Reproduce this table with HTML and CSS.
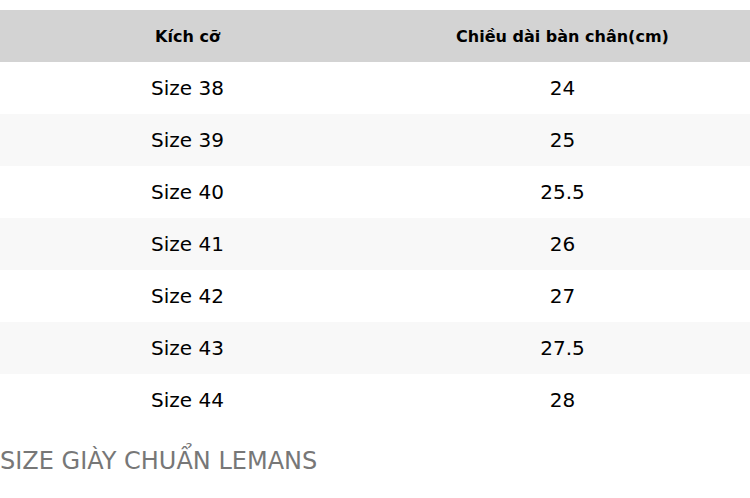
FILE: index.html
```html
<!DOCTYPE html>
<html lang="vi">
<head>
<meta charset="utf-8">
<link rel="stylesheet" href="styles.css">
</head>
<body>
<div class="wrap">
<table class="size-table">
<thead>
<tr><th>Kích cỡ</th><th>Chiều dài bàn chân(cm)</th></tr>
</thead>
<tbody>
<tr><td>Size 38</td><td>24</td></tr>
<tr><td>Size 39</td><td>25</td></tr>
<tr><td>Size 40</td><td>25.5</td></tr>
<tr><td>Size 41</td><td>26</td></tr>
<tr><td>Size 42</td><td>27</td></tr>
<tr><td>Size 43</td><td>27.5</td></tr>
<tr><td>Size 44</td><td>28</td></tr>
</tbody>
</table>
<p class="caption">SIZE GIÀY CHUẨN LEMANS</p>
</div>
</body>
</html>
```
FILE: styles.css
```css
html, body {
  margin: 0;
  padding: 0;
  background: #ffffff;
  font-family: "DejaVu Sans", sans-serif;
}
.wrap {
  padding-top: 10px;
}
.size-table {
  width: 750px;
  border-collapse: collapse;
  table-layout: fixed;
}
.size-table th,
.size-table td {
  height: 52px;
  padding: 0;
  text-align: center;
  vertical-align: middle;
  color: #000;
}
.size-table th {
  background: #d3d3d3;
  font-size: 16px;
  font-weight: bold;
}
.size-table td {
  font-size: 20px;
}
.size-table tbody tr:nth-child(even) td {
  background: #f8f8f8;
}
.caption {
  margin: 0;
  padding-top: 20px;
  line-height: 30px;
  font-size: 24px;
  color: #777777;
}
```
